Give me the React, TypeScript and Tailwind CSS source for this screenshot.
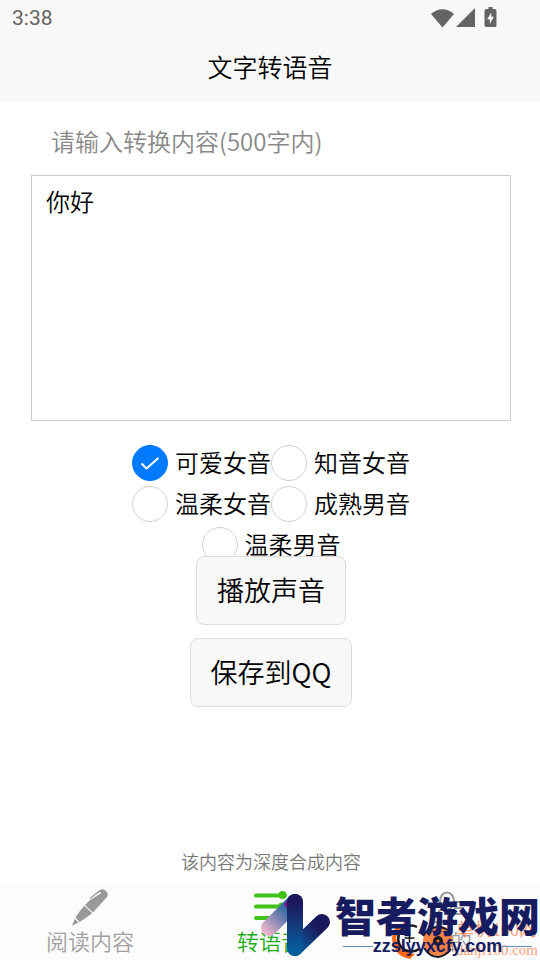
import React, { useState } from 'react';

const VOICES = ['可爱女音', '知音女音', '温柔女音', '成熟男音', '温柔男音'];

const StatusBar: React.FC = () => (
  <div className="flex h-9 items-center justify-between pl-3 pr-10 text-[#646464]">
    <span className="pt-0.5 font-[Roboto,sans-serif] text-[21px] font-normal">3:38</span>
    <svg width="70" height="24" viewBox="0 0 70 24" fill="currentColor" aria-hidden="true">
      <path d="M1 8C7.500 1.500 17.500 1.500 24 8L12.500 21.500z" />
      <path d="M45 2v19H26z" />
      <path d="M58.500 1h4v2h2q2 0 2 2v14.500q0 1.500-2 1.500h-8q-2 0-2-1.500V5q0-2 2-2h2z" />
      <path d="M61.300 6.500v4.300h2.500L59.800 18v-4.700h-2.600z" fill="#f8f8f8" />
    </svg>
  </div>
);

interface VoiceOptionProps {
  label: string;
  checked: boolean;
  onSelect: () => void;
}

const VoiceOption: React.FC<VoiceOptionProps> = ({ label, checked, onSelect }) => (
  <label className="flex h-[41px] items-center text-2xl">
    <span className="grid">
      <input
        type="radio"
        name="voice"
        checked={checked}
        onChange={onSelect}
        className="peer col-start-1 row-start-1 size-9 appearance-none rounded-full border border-[#d1d1d1] bg-white checked:border-[#007aff] checked:bg-[#007aff]"
      />
      <svg
        viewBox="0 0 36 36"
        className="pointer-events-none invisible col-start-1 row-start-1 size-9 peer-checked:visible"
        aria-hidden="true"
      >
        <path d="M9.500 18.500l5 5L26.500 13" fill="none" stroke="#fff" strokeWidth="2" />
      </svg>
    </span>
    <span className="ml-[7px] pb-px">{label}</span>
  </label>
);

const PenIcon: React.FC = () => (
  <svg width="38" height="38" viewBox="0 0 38 38" aria-hidden="true">
    <path d="M29 2q3-2 6 1 3 3 1 6L22 24.500 14 17z" fill="#999" />
    <path d="M13.300 17.800L21.200 25.300Q16 29.500 8.500 34L4.500 29.500Q8.500 23 13.300 17.800z" fill="#999" />
    <path d="M3.800 30.800L7.500 34.800 1 37.500z" fill="#999" />
    <path d="M20 10.500L29.500 4.500" stroke="#fcfcfc" strokeWidth="1.500" />
    <path d="M19 10.500L29 2.500" stroke="#999" strokeWidth="1.200" />
  </svg>
);

const SlidersIcon: React.FC = () => (
  <svg width="38" height="38" viewBox="0 0 38 38" aria-hidden="true">
    <g stroke="#41c218" strokeWidth="4" strokeLinecap="round">
      <path d="M5 7.500h29M5 18.500h29M5 30h29" />
    </g>
    <g fill="#41c218">
      <circle cx="31.500" cy="7" r="4" />
      <circle cx="31" cy="18.500" r="4" />
    </g>
  </svg>
);

const PersonIcon: React.FC = () => (
  <svg width="38" height="38" viewBox="0 0 38 38" fill="none" stroke="#999" strokeWidth="2" aria-hidden="true">
    <ellipse cx="16" cy="13" rx="7" ry="8.500" />
    <path d="M12 21Q4 24 3 34h17M23 14h10M23 20h10M23 26h10" />
  </svg>
);

const TABS = [
  { name: '阅读内容', icon: <PenIcon />, active: false },
  { name: '转语音', icon: <SlidersIcon />, active: true },
  { name: '我的', icon: <PersonIcon />, active: false },
];

const RivalMark: React.FC = () => (
  <div className="absolute bottom-0 right-0 flex items-end font-normal text-[#ff6b2b]/65">
    <svg width="66" height="40" viewBox="0 0 66 40" fill="none" aria-hidden="true">
      <path d="M21 2Q3 3 2 18q1 18 18 21l5-5Q9 32 6 18 8 7 21 2z" fill="#ff6813" />
      <path d="M27 7A13 13 0 1 0 29 29" stroke="#17191f" strokeWidth="2.500" />
      <path d="M19.500 13v10M14.500 18h10" stroke="#17191f" strokeWidth="1.500" />
      <circle cx="48" cy="21" r="15" fill="#f58345" />
      <path d="M33 16Q38 7 49 7q9 1 12 7M34 28q6 9 14 9 8-1 13-8" stroke="#17191f" strokeWidth="2" />
      <circle cx="48" cy="21" r="5" fill="#17191f" />
      <circle cx="48" cy="21" r="1.500" fill="#f27930" />
    </svg>
    <div className="pb-0.5 pr-0.5 font-['Liberation_Serif','Noto_Sans_CJK_SC',serif]">
      <div className="text-lg leading-6">单机100网</div>
      <div className="text-[15px] leading-4">danji100.com</div>
    </div>
  </div>
);

const SiteMark: React.FC = () => (
  <div className="absolute bottom-0 right-0 flex items-end text-[#171c61]">
    <svg width="80" height="70" viewBox="0 0 80 70" fill="none" strokeWidth="16" strokeLinecap="round" aria-hidden="true">
      <defs>
        <linearGradient id="tail" gradientUnits="userSpaceOnUse" x1="12" y1="43" x2="41" y2="14">
          <stop stopColor="#e8b4cb" />
          <stop offset=".5" stopColor="#6b7bae" />
          <stop offset="1" stopColor="#005e9e" />
        </linearGradient>
        <linearGradient id="stem" gradientUnits="userSpaceOnUse" x1="41" y1="12" x2="41" y2="60">
          <stop stopColor="#1d175b" />
          <stop offset="1" stopColor="#075e9d" />
        </linearGradient>
        <linearGradient id="arm" gradientUnits="userSpaceOnUse" x1="41" y1="58" x2="68" y2="32">
          <stop stopColor="#075e9d" />
          <stop offset=".8" stopColor="#1b185c" />
        </linearGradient>
      </defs>
      <path d="M14 38L40 12" stroke="url(#tail)" />
      <path d="M29 14l6-6v14z" fill="#8b0085" />
      <path d="M40 58l27-26" stroke="url(#arm)" />
      <path d="M40 12v46" stroke="url(#stem)" />
    </svg>
    <div className="pb-0.5 font-['Noto_Sans_CJK_SC',sans-serif]">
      <div className="text-[41px] font-black leading-10">智者游戏网</div>
      <div className="flex h-6 items-center pl-2 pr-2">
        <span className="h-px flex-1 bg-[#5e94bd]" />
        <span className="font-['Liberation_Sans',sans-serif] text-lg font-bold leading-5">zzslyyxcfy.com</span>
        <span className="h-px flex-1 bg-[#5e94bd]" />
      </div>
    </div>
  </div>
);

const App: React.FC = () => {
  const [text, setText] = useState('你好');
  const [voice, setVoice] = useState(VOICES[0]);

  return (
    <div className="flex min-h-screen flex-col bg-white font-['Noto_Sans_CJK_SC',sans-serif] font-[350] text-black">
      <header className="bg-[#f8f8f8]">
        <StatusBar />
        <h1 className="flex h-[66px] items-center justify-center pb-1 text-[25px] font-[350]">文字转语音</h1>
      </header>

      <main className="flex flex-1 flex-col items-center pl-0.5">
        <div className="w-full px-[29px]">
          <label htmlFor="content" className="block px-5 pb-4 pt-[21px] text-2xl leading-9 text-[#888]">
            请输入转换内容(500字内)
          </label>
          <textarea
            id="content"
            maxLength={500}
            value={text}
            onChange={(e) => setText(e.target.value)}
            className="block h-[246px] w-full resize-none border border-[#ccc] px-3.5 py-[7px] text-2xl leading-9 outline-none"
          />
        </div>

        <div className="mt-[21px] flex h-[114px] max-w-[280px] flex-wrap content-start justify-center">
          {VOICES.map((name) => (
            <VoiceOption key={name} label={name} checked={voice === name} onSelect={() => setVoice(name)} />
          ))}
        </div>

        <button className="relative h-[69px] rounded-lg border border-[#dcdcdc] bg-[#f8f8f8] px-5 text-[27px]">
          播放声音
        </button>
        <button className="mt-[13px] h-[69px] rounded-lg border border-[#dcdcdc] bg-[#f8f8f8] px-5 text-[27px]">
          保存到QQ
        </button>

        <p className="mt-auto pb-2.5 text-lg leading-7 text-[#777]">该内容为深度合成内容</p>
      </main>

      <footer className="relative overflow-hidden bg-[#fcfcfc]">
        <nav className="grid h-[75px] grid-cols-3">
          {TABS.map((tab) => (
            <a
              key={tab.name}
              href="#"
              className={`flex flex-col items-center pt-[3px] text-[22px] leading-7 ${tab.active ? 'text-[#1aad19]' : 'text-[#a0a0a0]'}`}
            >
              {tab.icon}
              {tab.name}
            </a>
          ))}
        </nav>
        <RivalMark />
        <SiteMark />
      </footer>
    </div>
  );
};

export default App;
